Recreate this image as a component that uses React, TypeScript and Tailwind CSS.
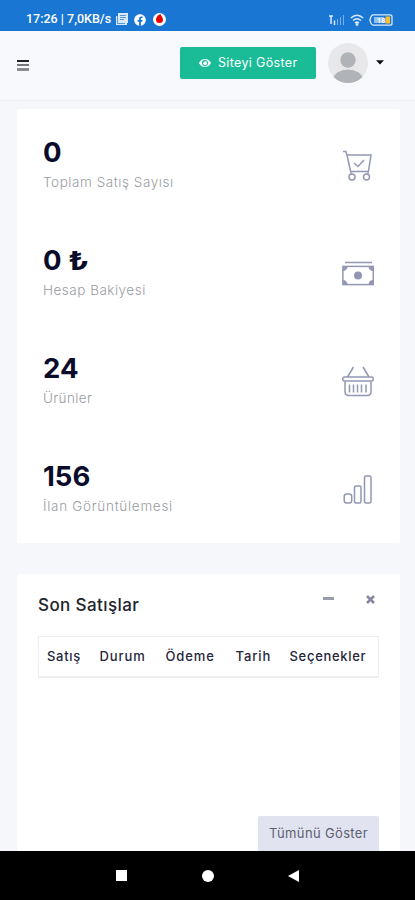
import type { ReactNode } from "react";
import { FaEye, FaFacebook } from "react-icons/fa";

type Stat = {
  value: string;
  unit?: string;
  label: string;
  labelClass: string;
  icon: ReactNode;
};

function CartIcon() {
  return (
    <svg width="32" height="32" viewBox="0 0 32 32" fill="none" stroke="currentColor" strokeWidth="1.5">
      <path d="M1 1.5h2.8L5 5h24l-2.6 16.500H8.600L5 5M9 22.500 8.800 25M26 22.500v2.500" />
      <path d="m12 13 4 3.500 6-6.500" />
      <circle cx="10" cy="27" r="3" />
      <circle cx="24.500" cy="27" r="3" />
    </svg>
  );
}

function CashIcon() {
  return (
    <svg width="32" height="32" viewBox="0 0 32 32" fill="none" stroke="currentColor" strokeWidth="1.5">
      <path d="M3 4.500h27" />
      <rect x="0.900" y="8.400" width="30.400" height="18.200" />
      <path fill="currentColor" stroke="none" d="M1 8.500h4.500a4.500 4.500 0 0 1-4.500 4.500zM31 8.500h-4.500a4.500 4.500 0 0 0 4.500 4.500zM1 26.500h4.500a4.500 4.500 0 0 0-4.500-4.500zM31 26.500h-4.500a4.500 4.500 0 0 1 4.500-4.500z" />
      <circle cx="16" cy="17.500" r="4" fill="currentColor" stroke="none" />
    </svg>
  );
}

function BasketIcon() {
  return (
    <svg width="32" height="32" viewBox="0 0 32 32" fill="none" stroke="currentColor" strokeWidth="1.5">
      <path d="m11.500 1-6 10M21 1l6 10" />
      <rect x="0.800" y="11" width="30.400" height="4" rx="1.500" />
      <path d="M3 15.500v10q0 4 4 4h18q4 0 4-4v-10M7.500 18.500v8M11.500 18.500v8M15.500 18.500v8M19.500 18.500v8M24 18.500v8" />
    </svg>
  );
}

function BarsIcon() {
  return (
    <svg width="32" height="32" viewBox="0 0 32 32" fill="none" stroke="currentColor" strokeWidth="1.500">
      <rect x="2.200" y="20" width="7.500" height="9" rx="2.500" />
      <rect x="12.500" y="12" width="6.500" height="17" rx="1.500" />
      <rect x="22.500" y="2" width="6.500" height="27" rx="1.500" />
    </svg>
  );
}

const stats: Stat[] = [
  { value: "0", label: "Toplam Satış Sayısı", labelClass: "tracking-[0.55px]", icon: <CartIcon /> },
  { value: "0", unit: "₺", label: "Hesap Bakiyesi", labelClass: "tracking-[0.5px]", icon: <CashIcon /> },
  { value: "24", label: "Ürünler", labelClass: "tracking-[0.4px]", icon: <BasketIcon /> },
  { value: "156", label: "İlan Görüntülemesi", labelClass: "tracking-[0.7px]", icon: <BarsIcon /> },
];

function StatusBar() {
  return (
    <div className="flex h-[31px] shrink-0 items-center bg-[#1976d2] pt-[8px] pr-[22px] pl-[26px] text-white">
      <span className="w-[89px] whitespace-nowrap font-[Roboto] text-[12.500px] font-medium leading-none">
        17:26 | 7,0KB/s
      </span>
      <svg width="13" height="13" viewBox="0 0 13 13" className="text-[#d9eaff]">
        <path fill="currentColor" d="M3 0h10v10h-1v2H1V3h2z" />
        <path stroke="#1976d2" strokeWidth="0.700" fill="none" d="M5 2.500h6M5 4.500h6M5 6.500h4M2.500 3v7.500H10" />
      </svg>
      <FaFacebook className="ml-[6px] size-[12px]" />
      <svg width="13" height="13" viewBox="0 0 13 13" className="ml-[7px]">
        <circle cx="6.500" cy="6.500" r="6.500" fill="#fff" />
        <path fill="#e60000" d="M7.500 1C4.500 2 3 4.500 3 6.500a3.500 3.500 0 0 0 7 0C10 4.500 8.300 3.500 7.500 1z" />
      </svg>
      <div className="ml-auto flex items-center">
        <svg width="16" height="11" viewBox="0 0 16 11" fill="none" stroke="#d9eaff">
          <path strokeWidth="1.500" d="M0 2h4M2 2v8M5.500 6.500V11" />
          <path opacity="0.500" d="M8.500 5v6M11.500 3v8M14.500 1v10" />
        </svg>
        <svg width="14" height="12" viewBox="0 0 14 12" fill="none" stroke="#d9eaff" strokeWidth="1.500" className="ml-[5px]">
          <path d="M.8 4q6.200-5.500 12.400 0M3 6.500q4-3.500 8 0M5 9q2-1.700 4 0" />
          <circle cx="7" cy="10.500" r=".7" />
        </svg>
        <svg width="24" height="12" viewBox="0 0 24 12" className="ml-[5px]">
          <path fill="none" stroke="#d9eaff" strokeWidth="1.300" d="M4 .8h17q2 0 2 2v6.400q0 2-2 2H4q-1.500 0-2-2L.8 6 2 2.800q.5-2 2-2z" />
          <path fill="#8fc0f0" d="M5 3h10v6H5z" />
          <path fill="#fbc02d" d="M16.500 2.500H21v7h-4.500z" />
          <text x="8" y="9" fontSize="7.500" fontFamily="Roboto" fontWeight="700" fill="#fff">18</text>
        </svg>
      </div>
    </div>
  );
}

function Header() {
  return (
    <header className="flex h-[70px] shrink-0 items-center border-b border-[#eff0f4] bg-[#f8f9fc] pr-[31px] pb-[6px] pl-[17px]">
      <button type="button" className="mt-[5px] flex w-[12px] flex-col gap-[2px]">
        <span className="h-[2px] bg-[#22222c]" />
        <span className="h-[2px] bg-[#777780]" />
        <span className="h-[3px] bg-[#8a8a92]" />
      </button>
      <button
        type="button"
        className="ml-auto flex h-[32px] w-[136px] items-center rounded-[2px] bg-[#1abc98] pl-[19px] text-[12.500px] leading-none text-white"
      >
        <FaEye className="mr-[7px] size-[12px]" />
        <span className="whitespace-nowrap pt-px tracking-[0.35px]">Siteyi Göster</span>
      </button>
      <svg width="40" height="40" viewBox="0 0 40 40" className="ml-[12px]">
        <clipPath id="avatar">
          <circle cx="20" cy="20" r="20" />
        </clipPath>
        <g clipPath="url(#avatar)">
          <path fill="#e8e8ea" d="M0 0h40v40H0z" />
          <circle cx="20" cy="17" r="7.700" fill="#b0b3b7" />
          <ellipse cx="20" cy="36" rx="14.500" ry="9.500" fill="#b0b3b7" />
        </g>
      </svg>
      <svg width="8" height="5" viewBox="0 0 8 5" className="ml-[8px]">
        <path fill="#111" d="M0 .3h8L4 4.500z" />
      </svg>
    </header>
  );
}

function StatRow({ stat }: { stat: Stat }) {
  return (
    <div className="flex h-[108px] items-start justify-between pr-[26px] pl-[26px]">
      <div className="pt-[27px]">
        <p className="whitespace-nowrap text-[27.500px] font-bold leading-[32px] text-[#0b0c2a]">
          {stat.value}
          {stat.unit ? (
            <span className="ml-[6px] inline-block origin-left scale-x-[1.250] text-[26px] leading-none">{stat.unit}</span>
          ) : null}
        </p>
        <p className={`mt-[4px] whitespace-nowrap text-[13.500px] font-light leading-[20px] text-[#999ca3] ${stat.labelClass}`}>
          {stat.label}
        </p>
      </div>
      <div className="mt-[41px] text-[#9298b3]">{stat.icon}</div>
    </div>
  );
}

function RecentSales() {
  return (
    <section className="mt-[31px] flex flex-1 flex-col rounded-t-[2px] bg-white px-[21px]">
      <div className="flex h-[62px] items-center justify-between">
        <h2 className="whitespace-nowrap text-[17px] font-medium leading-none tracking-[0.400px] text-[#22232b]">Son Satışlar</h2>
        <div className="mb-[11px] flex items-center gap-[32px] pr-[4px]">
          <span className="mb-[2px] h-[3px] w-[11px] bg-[#9a9cac]" />
          <svg width="9" height="9" viewBox="0 0 9 9" stroke="#85889f" strokeWidth="2.600">
            <path d="m1 1 7 7M8 1 1 8" />
          </svg>
        </div>
      </div>
      <table className="h-[42px] w-full table-fixed border border-b-2 border-[#edeef2] text-left text-[13px] leading-none text-[#25263a]">
        <thead>
          <tr className="whitespace-nowrap">
            <th className="w-[53px] pl-[8px] font-medium tracking-[0.700px]">Satış</th>
            <th className="w-[66px] pl-[8px] font-medium tracking-[0.900px]">Durum</th>
            <th className="w-[71px] pl-[8px] font-medium tracking-[0.900px]">Ödeme</th>
            <th className="w-[53px] pl-[7px] font-medium tracking-[0.900px]">Tarih</th>
            <th className="pl-[8px] font-medium tracking-[0.700px]">Seçenekler</th>
          </tr>
        </thead>
      </table>
      <button
        type="button"
        className="mt-auto flex h-[35px] w-[121px] items-center justify-center self-end whitespace-nowrap rounded-t-[2px] bg-[#e1e4f0] text-[13px] leading-none tracking-[0.350px] text-[#5d6072]"
      >
        Tümünü Göster
      </button>
    </section>
  );
}

function NavBar() {
  return (
    <nav className="flex h-[49px] shrink-0 items-center bg-black pl-[116px]">
      <span className="size-[11px] bg-white" />
      <span className="ml-[75px] size-[12px] rounded-full bg-white" />
      <svg width="11" height="12" viewBox="0 0 11 12" className="ml-[74px]">
        <path fill="#fff" d="M11 0v12L0 6z" />
      </svg>
    </nav>
  );
}

export default function App() {
  return (
    <div className="flex h-[900px] w-[415px] flex-col overflow-hidden bg-[#f5f7fb] font-[Inter,sans-serif]">
      <StatusBar />
      <Header />
      <main className="flex flex-1 flex-col pt-[8px] pr-[15px] pl-[17px]">
        <section className="h-[434px] rounded-[2px] bg-white">
          {stats.map((stat) => (
            <StatRow key={stat.label} stat={stat} />
          ))}
        </section>
        <RecentSales />
      </main>
      <NavBar />
    </div>
  );
}
